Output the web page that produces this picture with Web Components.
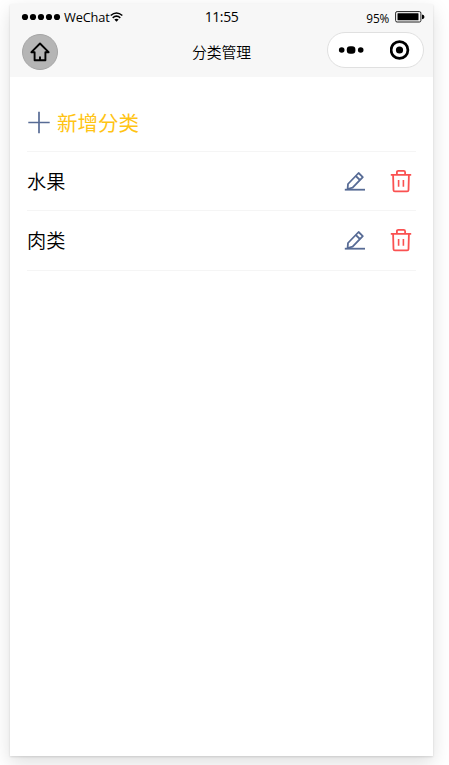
<!DOCTYPE html>
<html lang="zh-CN">
<head>
<meta charset="utf-8">
<title>分类管理</title>
<style>
    body {
        margin: 0;
        height: 765px;
        overflow: hidden;
        background: #fff;
        font-family: "Open Sans", "Noto Sans CJK SC", sans-serif;
        color: #000;
    }
</style>
</head>
<body>
<phone-frame>
    <status-bar slot="top" carrier="WeChat" time="11:55" battery="95%"></status-bar>
    <nav-bar slot="top">分类管理</nav-bar>
    <add-category>新增分类</add-category>
    <category-item>水果</category-item>
    <category-item>肉类</category-item>
</phone-frame>

<script>
class PhoneFrame extends HTMLElement {
    constructor() {
        super();
        this.attachShadow({mode: "open"}).innerHTML = `
            <style>
                :host {
                    display: block;
                    box-sizing: border-box;
                    width: 423px;
                    height: 752px;
                    margin: 4px 0 0 10px;
                    background: #fff;
                    box-shadow: 0 1px 2px rgba(0, 0, 0, 0.12), 0 7px 18px rgba(0, 0, 0, 0.13);
                }
                header {
                    height: 73px;
                    background: #f7f7f7;
                }
                main {
                    padding: 15px 17px 0;
                }
            </style>
            <header><slot name="top"></slot></header>
            <main><slot></slot></main>`;
    }
}

class StatusBar extends HTMLElement {
    constructor() {
        super();
        this.attachShadow({mode: "open"}).innerHTML = `
            <style>
                :host {
                    display: grid;
                    grid-template-columns: 1fr auto 1fr;
                    height: 26px;
                    padding: 0 8px 0 11px;
                    box-sizing: border-box;
                    align-items: center;
                    line-height: 18px;
                }
                div {
                    display: flex;
                    align-items: center;
                }
                .carrier {
                    font-size: 12.8px;
                    letter-spacing: -0.15px;
                }
                .dots {
                    margin-right: 3px;
                }
                .time {
                    font-size: 14px;
                    letter-spacing: -0.4px;
                    padding-right: 3px;
                }
                .power {
                    justify-content: flex-end;
                    font-size: 11.8px;
                    gap: 6px;
                }
                .power span {
                    letter-spacing: -0.2px;
                    padding-top: 2px;
                }
            </style>
            <div class="carrier">
                <svg class="dots" width="40" height="8" viewBox="0 0 40 8">
                    <circle cx="4" cy="4" r="3.1"/><circle cx="12" cy="4" r="3.1"/><circle cx="20" cy="4" r="3.1"/><circle cx="28" cy="4" r="3.1"/><circle cx="36" cy="4" r="3.1"/>
                </svg>
                <span>${this.getAttribute("carrier")}</span>
                <svg width="13" height="10" viewBox="0 0 13 10" fill="none" stroke="#000" stroke-width="1.6">
                    <path d="M.7 3.5Q6.5-1.5 12.3 3.5M2.7 5.8Q6.5 2.6 10.3 5.8"/>
                    <path d="M4.3 7.6Q6.5 6 8.7 7.6L6.5 9.8z" fill="#000" stroke="none"/>
                </svg>
            </div>
            <div class="time">${this.getAttribute("time")}</div>
            <div class="power">
                <span>${this.getAttribute("battery")}</span>
                <svg width="30" height="12" viewBox="0 0 30 12">
                    <rect x=".6" y=".6" width="25.3" height="10.4" rx="1.5" fill="none" stroke="#222"/>
                    <rect x="2.5" y="2.3" width="21" height="7" rx=".5"/>
                    <path d="M27 3.5q2.5.4 2.5 2.4T27 8.3z"/>
                </svg>
            </div>`;
    }
}

class NavBar extends HTMLElement {
    constructor() {
        super();
        this.attachShadow({mode: "open"}).innerHTML = `
            <style>
                :host {
                    display: grid;
                    grid-template-columns: 1fr auto 1fr;
                    height: 47px;
                    padding: 0 9px 0 11px;
                    box-sizing: border-box;
                    align-items: start;
                }
                .home {
                    display: flex;
                    align-items: center;
                    justify-content: center;
                    width: 36px;
                    height: 36px;
                    margin: 4px 0 0 .5px;
                    box-sizing: border-box;
                    border: 1px solid #a5a5a5;
                    border-radius: 50%;
                    background: #b5b5b5;
                }
                h1 {
                    margin: 11px 0 0;
                    padding-right: 2px;
                    font-size: 14.8px;
                    font-weight: 350;
                    line-height: 22px;
                }
                .capsule {
                    display: flex;
                    justify-self: end;
                    align-items: center;
                    justify-content: space-between;
                    width: 97px;
                    height: 36px;
                    margin-top: 2px;
                    padding: 0 13px 0 10px;
                    box-sizing: border-box;
                    border: 1px solid #e0e0e0;
                    border-radius: 18px;
                    background: #fff;
                }
            </style>
            <div class="home">
                <svg width="20" height="20" viewBox="0 0 20 20" fill="none" stroke="#000" stroke-width="1.9" stroke-linejoin="round">
                    <path d="M10 1.5L1.4 10.2H4.6V18.2H15.4V10.2H18.6Z"/>
                    <path d="M10 18V14.6"/>
                </svg>
            </div>
            <h1><slot></slot></h1>
            <div class="capsule">
                <svg width="26" height="10" viewBox="0 0 26 10">
                    <circle cx="3.7" cy="5" r="2.8"/><rect x="8.8" y="1.2" width="8.6" height="7.6" rx="3.3"/><circle cx="22.7" cy="5" r="2.8"/>
                </svg>
                <svg width="20" height="20" viewBox="0 0 20 20">
                    <circle cx="9.5" cy="10" r="8.4" fill="none" stroke="#000" stroke-width="2.7"/>
                    <circle cx="9.5" cy="10" r="3.6"/>
                </svg>
            </div>`;
    }
}

class AddCategory extends HTMLElement {
    constructor() {
        super();
        this.attachShadow({mode: "open"}).innerHTML = `
            <style>
                :host {
                    display: flex;
                    align-items: center;
                    gap: 6px;
                    height: 60px;
                    padding: 2px 0 0 1px;
                    box-sizing: border-box;
                    border-bottom: 1px solid #f5f5f5;
                    color: #ffc414;
                    font-size: 20.5px;
                    font-weight: 400;
                    line-height: 30px;
                }
            </style>
            <svg width="23" height="23" viewBox="0 0 23 23" fill="none" stroke="#576b95" stroke-width="1.7">
                <path d="M11 .8V22.2M.3 11.5H21.7"/>
            </svg>
            <slot></slot>`;
    }
}

class CategoryItem extends HTMLElement {
    constructor() {
        super();
        this.attachShadow({mode: "open"}).innerHTML = `
            <style>
                :host {
                    display: flex;
                    align-items: center;
                    height: 59.3px;
                    padding-right: 4px;
                    box-sizing: border-box;
                    border-bottom: 1px solid #f5f5f5;
                    font-size: 19.2px;
                    font-weight: 350;
                    line-height: 28px;
                }
                .name {
                    flex: 1;
                    padding-top: 1px;
                }
                .edit {
                    margin-right: 24px;
                }
            </style>
            <span class="name"><slot></slot></span>
            <svg class="edit" width="22" height="22" viewBox="0 0 22 22" fill="none" stroke="#576b95" stroke-width="1.8" stroke-linejoin="round">
                <path d="M.8 19.7H21"/>
                <path d="M3.6 19L4 14L14.6 3L18.8 7.1L8.6 17.6Z"/>
                <path d="M11.8 6L15.9 10"/>
            </svg>
            <svg width="22" height="24" viewBox="0 0 22 24" fill="none" stroke="#fa5151" stroke-width="1.8" stroke-linejoin="round">
                <path d="M.8 5.8H21.2M6.9 5.5V3.2Q6.9 1.8 8.3 1.8H13.7Q15.1 1.8 15.1 3.2V5.5"/>
                <path d="M3.1 6L3.5 21.2Q3.6 22.4 4.8 22.4H17.2Q18.4 22.4 18.5 21.2L18.9 6"/>
                <path d="M8.6 11V17.8M13.4 11V17.8" stroke-width="1.6"/>
            </svg>`;
    }
}

customElements.define("phone-frame", PhoneFrame);
customElements.define("status-bar", StatusBar);
customElements.define("nav-bar", NavBar);
customElements.define("add-category", AddCategory);
customElements.define("category-item", CategoryItem);
</script>
</body>
</html>
